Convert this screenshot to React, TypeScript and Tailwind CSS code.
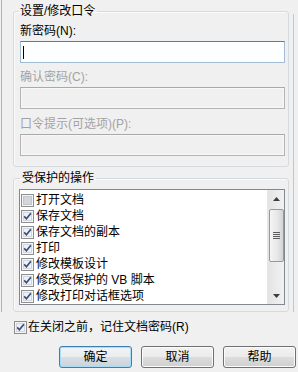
import React from 'react'

const font = "font-['Liberation_Sans','Noto_Sans_CJK_SC',sans-serif]"

const CheckBox = ({ checked }: { checked: boolean }) => (
  <svg width="13" height="13" viewBox="0 0 13 13" className="shrink-0">
    <rect x="0.5" y="0.5" width="12" height="12" fill="#f5f5f5" stroke="#8f8f8f" />
    {checked ? (
      <rect x="2.5" y="2.5" width="8" height="8" fill="#eef0f3" stroke="#d2d5d9" />
    ) : (
      <rect x="2.5" y="2.5" width="8" height="8" fill="#d3d6da" stroke="#c3c6ca" />
    )}
    {checked && (
      <path d="M3.2 6.4 L5.4 8.8 L9.9 3.2" fill="none" stroke="#324f8c" strokeWidth="1.7" />
    )}
  </svg>
)

const TextField = ({ focused }: { focused?: boolean }) =>
  focused ? (
    <div className="mt-[3px] h-[22px] border border-[#a3bcd3] border-t-[#5b7d9f] bg-[#fdfeff] flex items-center pl-[2px]">
      <div className="w-px h-[13px] bg-black" />
    </div>
  ) : (
    <div className="mt-[3px] h-[22px] border border-[#b4b4b4] border-t-[#a9a9a9] bg-[#f0f0f0] shadow-[inset_0_0_0_1px_#f7f7f7]" />
  )

const items: { label: string; checked: boolean }[] = [
  { label: '打开文档', checked: false },
  { label: '保存文档', checked: true },
  { label: '保存文档的副本', checked: true },
  { label: '打印', checked: true },
  { label: '修改模板设计', checked: true },
  { label: '修改受保护的 VB 脚本', checked: true },
  { label: '修改打印对话框选项', checked: true },
]

const Button = ({ label, primary }: { label: string; primary?: boolean }) => (
  <button
    className={
      primary
        ? 'w-[73px] h-[22px] rounded-[3px] border border-[#3c7fb1] text-[12px] leading-[14px] text-black bg-[linear-gradient(to_bottom,#f2f4f6_0%,#e9edf0_50%,#d9dfe4_50%,#cbd3da_100%)] shadow-[inset_0_0_0_1px_#a9dcf6]'
        : 'w-[73px] h-[22px] rounded-[3px] border border-[#707070] text-[12px] leading-[14px] text-black bg-[linear-gradient(to_bottom,#f2f2f2_0%,#ebebeb_50%,#dddddd_50%,#cfcfcf_100%)] shadow-[inset_0_0_0_1px_#fbfbfb]'
    }
  >
    {label}
  </button>
)

const ScrollBar = () => (
  <div className="w-[17px] h-full flex flex-col bg-[linear-gradient(to_right,#e4e4e4,#f2f2f2)] border-l border-[#e6e6e6]">
    <div className="h-[17px] flex items-center justify-center">
      <svg width="7" height="4" viewBox="0 0 7 4">
        <polygon points="0,4 3.5,0 7,4" fill="#3d3d3d" />
      </svg>
    </div>
    <div className="mt-[2px] mx-auto w-[15px] h-[53px] rounded-[2px] border border-[#999] bg-[linear-gradient(to_right,#f4f4f4,#e9e9e9_50%,#d4d4d4)] flex flex-col items-center justify-center gap-px">
      <div className="w-[7px] h-px bg-[#5c5c5c]" />
      <div className="w-[7px] h-px bg-[#5c5c5c]" />
      <div className="w-[7px] h-px bg-[#5c5c5c]" />
      <div className="w-[7px] h-px bg-[#5c5c5c]" />
    </div>
    <div className="flex-1" />
    <div className="h-[17px] flex items-center justify-center">
      <svg width="7" height="4" viewBox="0 0 7 4">
        <polygon points="0,0 7,0 3.5,4" fill="#3d3d3d" />
      </svg>
    </div>
  </div>
)

export default function App() {
  return (
    <div className={`w-[298px] h-[372px] bg-[#f0f0f0] text-black overflow-hidden ${font}`}>
      <div className="flex h-[312px]">
        <div className="ml-px w-px bg-[#b3b3b3]" />
        <div className="ml-[11px] w-[276px]">
          {/* 设置/修改口令 */}
          <fieldset className="block min-w-0 mt-[4px] border border-[#d5dadf] rounded-[3px] pl-[6px] pr-[3px] pb-[10px] shadow-[inset_1px_1px_0_#fbfbfb]">
            <legend className="-ml-[2px] px-[2px] text-[12px] leading-[14px]">设置/修改口令</legend>
            <div className="mt-[6px] text-[12px] leading-[14px]">新密码(N):</div>
            <TextField focused />
            <div className="mt-[7px] text-[12px] leading-[14px] text-[#a3a3a3]">确认密码(C):</div>
            <TextField />
            <div className="mt-[8px] text-[12px] leading-[14px] text-[#a3a3a3]">口令提示(可选项)(P):</div>
            <TextField />
          </fieldset>

          {/* 受保护的操作 */}
          <fieldset className="block min-w-0 mt-[4px] border border-[#d5dadf] rounded-[3px] pl-[5px] pr-[3px] pb-[6px] shadow-[inset_1px_1px_0_#fbfbfb]">
            <legend className="ml-px px-[2px] text-[12px] leading-[14px]">受保护的操作</legend>
            <div className="mt-[4px] h-[116px] border border-[#828790] bg-white flex">
              <div className="flex-1 pt-[2px] pl-px">
                {items.map((it) => (
                  <div key={it.label} className="flex items-center h-[16px]">
                    <CheckBox checked={it.checked} />
                    <span className="ml-[2px] text-[12px] leading-[14px] whitespace-nowrap">{it.label}</span>
                  </div>
                ))}
              </div>
              <ScrollBar />
            </div>
          </fieldset>
        </div>
        <div className="ml-[4px] mt-[14px] w-px bg-[#c6c6c6]" />
      </div>

      <div className="mt-[8px] pl-[14px] flex items-center h-[14px]">
        <CheckBox checked />
        <span className="ml-[1px] text-[12px] leading-[14px] whitespace-nowrap">在关闭之前，记住文档密码(R)</span>
      </div>

      <div className="mt-[12px] pl-[59px] flex gap-[9px]">
        <Button label="确定" primary />
        <Button label="取消" />
        <Button label="帮助" />
      </div>
    </div>
  )
}
